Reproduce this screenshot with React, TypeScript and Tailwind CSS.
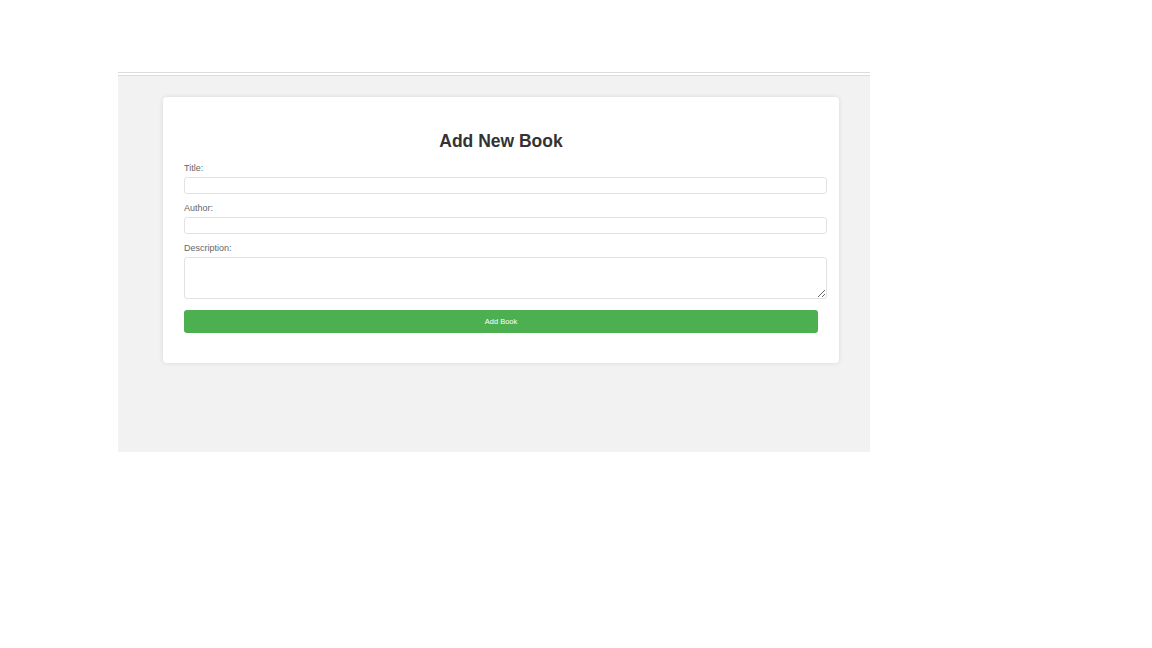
import React, { useState } from 'react';

const App = () => {
  const [title, setTitle] = useState('');
  const [author, setAuthor] = useState('');
  const [description, setDescription] = useState('');

  return (
    <div className="min-h-screen bg-white font-['Liberation_Sans',Arial,sans-serif]">
      <div className="pt-[72px] pl-[118px]">
        <div className="w-[752px]">
          {/* hr */}
          <div className="h-[4px] border-t border-b border-[#dcdcdc]" />

          <div className="h-[376px] bg-[#f2f2f2] pt-[21px] pl-[45px]">
            <div className="w-[676px] bg-white rounded-[4px] shadow-[0_0_5px_rgba(0,0,0,0.1)] pt-[20px] pb-[30px] px-[21px]">
              <h2 className="mt-[14px] mb-[12px] text-center text-[17.5px] leading-[20px] font-bold text-[#333]">
                Add New Book
              </h2>
              <form onSubmit={(e) => e.preventDefault()}>
                <label className="block text-[9px] leading-[11px] text-[#666] mb-[3px]">Title:</label>
                <input
                  value={title}
                  onChange={(e) => setTitle(e.target.value)}
                  className="block w-[643px] h-[17px] border border-[#e2e2e2] rounded-[3px] bg-white outline-none"
                />

                <label className="block mt-[9px] text-[9px] leading-[11px] text-[#666] mb-[3px]">Author:</label>
                <input
                  value={author}
                  onChange={(e) => setAuthor(e.target.value)}
                  className="block w-[643px] h-[17px] border border-[#e2e2e2] rounded-[3px] bg-white outline-none"
                />

                <label className="block mt-[9px] text-[9px] leading-[11px] text-[#666] mb-[3px]">Description:</label>
                <textarea
                  value={description}
                  onChange={(e) => setDescription(e.target.value)}
                  className="block w-[643px] h-[42px] border border-[#e2e2e2] rounded-[3px] bg-white outline-none"
                />

                <button
                  type="submit"
                  className="block mt-[11px] w-[634px] h-[23px] bg-[#4caf50] text-white text-[7.5px] rounded-[3px]"
                >
                  Add Book
                </button>
              </form>
            </div>
          </div>
        </div>
      </div>
    </div>
  );
};

export default App;
